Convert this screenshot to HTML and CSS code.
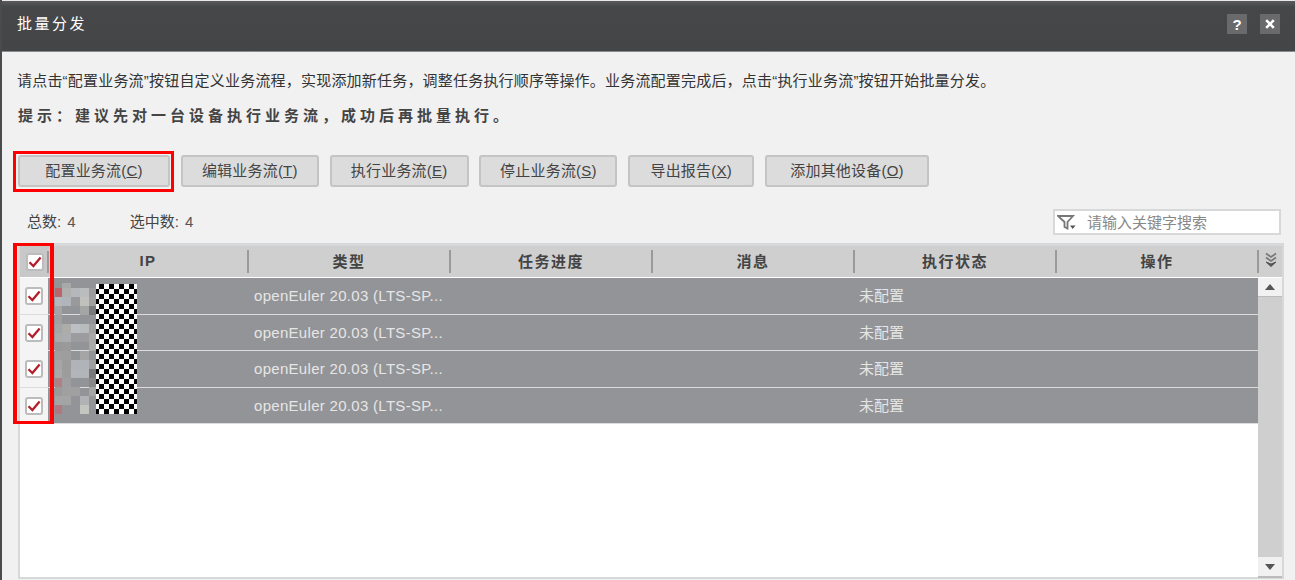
FILE: index.html
```html
<!DOCTYPE html>
<html lang="zh-CN">
<head>
<meta charset="utf-8">
<title>批量分发</title>
<link rel="stylesheet" href="styles.css">
</head>
<body>
<svg class="defs" width="0" height="0" aria-hidden="true">
  <symbol id="tick" viewBox="0 0 14 14"><path d="M1.5 7.2 L5.4 11 L12.6 2.6" fill="none" stroke="#b3202c" stroke-width="2.3"/></symbol>
</svg>
<div class="dialog">
  <header class="titlebar">
    <span class="title">批量分发</span>
    <div class="title-actions">
      <span class="title-btn">?</span>
      <span class="title-btn">
        <svg width="10" height="10" viewBox="0 0 10 10"><path d="M1.2 1.2 L8.8 8.8 M8.8 1.2 L1.2 8.8" stroke="#fff" stroke-width="2.6" fill="none"/></svg>
      </span>
    </div>
  </header>
  <main class="content">
    <p class="intro">请点击“配置业务流”按钮自定义业务流程，实现添加新任务，调整任务执行顺序等操作。业务流配置完成后，点击“执行业务流”按钮开始批量分发。</p>
    <p class="tip">提示：建议先对一台设备执行业务流，成功后再批量执行。</p>
    <div class="toolbar">
      <button class="btn btn-hl w152">配置业务流(<u>C</u>)</button>
      <button class="btn w138">编辑业务流(<u>T</u>)</button>
      <button class="btn w139">执行业务流(<u>E</u>)</button>
      <button class="btn w138">停止业务流(<u>S</u>)</button>
      <button class="btn w126">导出报告(<u>X</u>)</button>
      <button class="btn w164">添加其他设备(<u>O</u>)</button>
    </div>
    <div class="statusline">
      <span class="count">总数: <b>4</b></span>
      <span class="count second">选中数: <b>4</b></span>
      <label class="search">
        <svg class="filter" width="19" height="15" viewBox="0 0 19 15"><path d="M1 1 H16 L10.5 7 V13.5 L7.5 12 V7 Z" fill="#fff" stroke="#777" stroke-width="1.8"/><path d="M13 10.5 H18.5 L15.7 14 Z" fill="#555"/></svg>
        <span class="placeholder">请输入关键字搜索</span>
      </label>
    </div>
    <div class="table">
      <div class="thead">
        <div class="th th-check"><span class="cb"><svg width="14" height="14"><use href="#tick"/></svg></span></div>
        <div class="th">IP</div>
        <div class="th">类型</div>
        <div class="th">任务进度</div>
        <div class="th">消息</div>
        <div class="th">执行状态</div>
        <div class="th">操作</div>
        <div class="th th-more">
          <svg width="12" height="16" viewBox="0 0 12 16"><path d="M1 1.5 L6 5 L11 1.5 M1 5.5 L6 9 L11 5.5" stroke="#777" stroke-width="1.6" fill="none"/><path d="M1 10 L6 14.5 L11 10 L6 12 Z" fill="#555" stroke="#555"/></svg>
        </div>
      </div>
      <div class="tbody">
        <div class="rows">
          <div class="row"><div class="td-check"><span class="cb"><svg width="14" height="14"><use href="#tick"/></svg></span></div><div></div><div class="td">openEuler 20.03 (LTS-SP...</div><div></div><div></div><div class="td td-state">未配置</div><div></div></div>
          <div class="row"><div class="td-check"><span class="cb"><svg width="14" height="14"><use href="#tick"/></svg></span></div><div></div><div class="td">openEuler 20.03 (LTS-SP...</div><div></div><div></div><div class="td td-state">未配置</div><div></div></div>
          <div class="row"><div class="td-check"><span class="cb"><svg width="14" height="14"><use href="#tick"/></svg></span></div><div></div><div class="td">openEuler 20.03 (LTS-SP...</div><div></div><div></div><div class="td td-state">未配置</div><div></div></div>
          <div class="row"><div class="td-check"><span class="cb"><svg width="14" height="14"><use href="#tick"/></svg></span></div><div></div><div class="td">openEuler 20.03 (LTS-SP...</div><div></div><div></div><div class="td td-state">未配置</div><div></div></div>
          <svg class="mosaic" width="41" height="131" viewBox="55 283 41 131" shape-rendering="crispEdges">
            <rect x="62" y="283" width="9" height="5" fill="#a9a9a9"/>
            <rect x="55" y="288" width="7" height="9" fill="#b9656c"/><rect x="62" y="288" width="9" height="9" fill="#b0b0ae"/><rect x="71" y="288" width="9" height="9" fill="#b5b8bb"/><rect x="80" y="288" width="9" height="9" fill="#bbbcbe"/><rect x="89" y="288" width="7" height="9" fill="#9c9c9e"/>
            <rect x="55" y="297" width="7" height="9" fill="#b4b8bd"/><rect x="62" y="297" width="9" height="9" fill="#b0b4bb"/><rect x="71" y="297" width="9" height="9" fill="#9a9a9c"/><rect x="80" y="297" width="9" height="9" fill="#c0c0bc"/><rect x="89" y="297" width="7" height="9" fill="#a0a0a0"/>
            <rect x="55" y="306" width="7" height="9" fill="#a5a5a8"/><rect x="80" y="306" width="9" height="9" fill="#a4a5a5"/><rect x="89" y="306" width="7" height="9" fill="#77797a"/>
            <rect x="55" y="315" width="7" height="9" fill="#a0a0a2"/>
            <rect x="55" y="324" width="7" height="9" fill="#a3a5a8"/><rect x="62" y="324" width="9" height="9" fill="#acaca8"/><rect x="71" y="324" width="9" height="9" fill="#bcc0c4"/><rect x="80" y="324" width="9" height="9" fill="#b8bcbc"/><rect x="89" y="324" width="7" height="9" fill="#a0a0a0"/>
            <rect x="55" y="333" width="7" height="9" fill="#a8aaae"/><rect x="62" y="333" width="9" height="9" fill="#aaacb0"/><rect x="71" y="333" width="9" height="9" fill="#9c9c9e"/><rect x="80" y="333" width="9" height="9" fill="#9c9c9e"/><rect x="89" y="333" width="7" height="9" fill="#a8a8a8"/>
            <rect x="55" y="342" width="7" height="9" fill="#989898"/><rect x="62" y="342" width="9" height="9" fill="#9a9a9a"/><rect x="89" y="342" width="7" height="9" fill="#aaaaaa"/>
            <rect x="55" y="351" width="7" height="9" fill="#9f9f9f"/><rect x="62" y="351" width="9" height="9" fill="#9e9e9e"/><rect x="80" y="351" width="9" height="9" fill="#a5a5a5"/>
            <rect x="55" y="360" width="7" height="9" fill="#a5a5a5"/><rect x="62" y="360" width="9" height="9" fill="#9c9c9c"/><rect x="71" y="360" width="18" height="9" fill="#b0b4b8"/><rect x="89" y="360" width="7" height="9" fill="#a0a0a0"/>
            <rect x="55" y="369" width="7" height="9" fill="#a8a8a8"/><rect x="62" y="369" width="9" height="9" fill="#9c9c9c"/><rect x="71" y="369" width="18" height="9" fill="#b2b6ba"/><rect x="89" y="369" width="7" height="9" fill="#777879"/>
            <rect x="55" y="378" width="7" height="9" fill="#b08088"/><rect x="62" y="378" width="9" height="9" fill="#9f9f9f"/><rect x="89" y="378" width="7" height="9" fill="#888888"/>
            <rect x="55" y="387" width="7" height="9" fill="#9a9a9a"/><rect x="62" y="387" width="18" height="9" fill="#a0a0a0"/><rect x="89" y="387" width="7" height="9" fill="#a5a5a5"/>
            <rect x="55" y="396" width="7" height="9" fill="#a5a5a5"/><rect x="62" y="396" width="9" height="9" fill="#a4a4a4"/><rect x="80" y="396" width="9" height="9" fill="#b0b2b6"/>
            <rect x="55" y="405" width="7" height="9" fill="#b07880"/><rect x="80" y="405" width="9" height="9" fill="#c4c5c0"/>
          </svg>
          <div class="checker"></div>
        </div>
        <div class="scrollbar">
          <div class="sb-btn"><span class="tri-up"></span></div>
          <div class="sb-track"></div>
          <div class="sb-btn sb-btn-down"><span class="tri-down"></span></div>
        </div>
      </div>
      <div class="hl-column"></div>
    </div>
  </main>
</div>
</body>
</html>
```

FILE: styles.css
```css
* { box-sizing: border-box; }
html, body { margin: 0; padding: 0; background: #fff; }
body {
  font-family: "Liberation Sans", "Noto Sans CJK SC", sans-serif;
  font-size: 15px;
  color: #444;
  overflow: hidden;
}
.defs { position: absolute; }
.dialog {
  width: 1295px;
  height: 580px;
  border-left: 2px solid #4a4b4d;
  background: #f1f1f1;
  overflow: hidden;
}
.titlebar {
  height: 52px;
  display: flex;
  align-items: center;
  justify-content: space-between;
  padding: 0 15px 4px 15px;
  background: linear-gradient(#5a5a5c 0, #464749 6px, #444547 100%);
  border-top: 1px solid #e8e8e8;
  border-bottom: 1px solid #8c8c8c;
}
.title { color: #fff; letter-spacing: 2.5px; margin-bottom: 3px; }
.title-actions { display: flex; gap: 13px; }
.title-btn {
  width: 20px;
  height: 20px;
  background: #6a6a6c;
  color: #fff;
  font-weight: bold;
  font-size: 15px;
  display: flex;
  align-items: center;
  justify-content: center;
}
.content { padding: 0 0 0 16px; }
.intro { margin: 18px 0 0 -1px; line-height: 22px; color: #333; white-space: nowrap; letter-spacing: 0.2px; }
.tip {
  margin: 13px 0 0;
  line-height: 22px;
  font-weight: bold;
  letter-spacing: 4px;
  color: #444;
  white-space: nowrap;
}
.toolbar { display: flex; gap: 10.8px; margin-top: 28px; }
.btn {
  height: 32px;
  padding: 0 0 3px;
  font: inherit;
  letter-spacing: 0.2px;
  color: #444;
  background: #dcdcdc;
  border: 2px solid #c4c4c4;
  border-radius: 3px;
}
.w152 { width: 152px; }
.w138 { width: 138px; }
.w139 { width: 139px; }
.w126 { width: 126px; }
.w164 { width: 164px; }
.btn-hl { position: relative; }
.btn-hl::after {
  content: "";
  position: absolute;
  left: -7px;
  right: -6px;
  top: -6px;
  bottom: -7px;
  border: 3.5px solid #f00;
}
.statusline { display: flex; align-items: center; height: 26px; margin-top: 22px; padding-left: 9px; width: 1263px; }
.count { font-size: 15px; white-space: nowrap; padding-bottom: 3px; }
.count b { font-weight: normal; color: #555; margin-left: 2px; }
.second { margin-left: 54px; }
.search {
  margin-left: auto;
  width: 228px;
  height: 26px;
  background: #fff;
  border: 2px solid #d6d8da;
  display: flex;
  align-items: center;
  padding-left: 2px;
}
.filter { flex: none; }
.placeholder { margin-left: 11px; color: #888; padding-bottom: 2px; }
.table {
  position: relative;
  width: 1266px;
  height: 336px;
  margin-top: 8px;
  background: #fff;
  border: 2px solid #d6d8da;
  border-top-width: 3px;
}
.thead, .row { display: grid; grid-template-columns: 28px 200px repeat(5, 202px); }
.thead {
  grid-template-columns: 29px 200px repeat(5, 202px) 23px;
  height: 31px;
  background: #cfcfcf;
  align-items: center;
  margin-bottom: 1px;
  position: relative;
}
.th {
  height: 23px;
  display: flex;
  align-items: center;
  justify-content: center;
  font-weight: bold;
  letter-spacing: 1.5px;
  color: #444;
  padding-bottom: 3px;
  border-right: 2px solid #9a9a9a;
}
.th-check { height: 31px; padding-bottom: 0; background: #c8c8c8; border-right: 0; position: relative; }
.th-check::after { content: ""; position: absolute; right: 0; top: 5px; width: 2px; height: 22px; background: #9a9a9a; }
.th-more { border-right: 0; }
.cb {
  width: 18px;
  height: 18px;
  background: #fff;
  border: 2px solid #bcbcbc;
  border-radius: 3px;
  display: flex;
  align-items: center;
  justify-content: center;
}
.tbody { display: flex; height: 300px; }
.rows { position: relative; flex: 1; }
.row { height: 36.6px; background: #939497; border-bottom: 1.5px solid #dcdcdc; }
.row:last-of-type { border-bottom: 0; }
.td-check {
  background: #f4f4f4;
  display: flex;
  align-items: center;
  justify-content: center;
  padding-right: 1px;
}
.td {
  color: #e6e6e6;
  font-size: 15px;
  line-height: 36px;
  padding-left: 6px;
  white-space: nowrap;
  letter-spacing: 0.3px;
}
.td-state { padding-left: 5px; letter-spacing: 0; }
.mosaic { position: absolute; left: 35px; top: 5px; }
.checker {
  position: absolute;
  left: 76px;
  top: 6px;
  width: 41px;
  height: 130px;
  background: repeating-conic-gradient(#000 0 25%, #fff 0 50%) -2px 0 / 10px 10px;
}
.scrollbar { width: 24px; display: flex; flex-direction: column; background: #cfcfcf; }
.sb-btn {
  height: 19px;
  flex: none;
  background: #f1f1f1;
  border-bottom: 1px solid #bbb;
  display: flex;
  align-items: center;
  justify-content: center;
}
.sb-btn-down { height: 21px; border-bottom: 2px solid #bbb; }
.sb-track { flex: 1; }
.tri-up { border: 5px solid transparent; border-top: 0; border-bottom: 6px solid #555; }
.tri-down { border: 5px solid transparent; border-bottom: 0; border-top: 6px solid #555; }
.hl-column {
  position: absolute;
  left: -7px;
  top: -3px;
  width: 41px;
  height: 181px;
  border: 4px solid #f00;
  border-width: 3.5px 4px;
}
```
